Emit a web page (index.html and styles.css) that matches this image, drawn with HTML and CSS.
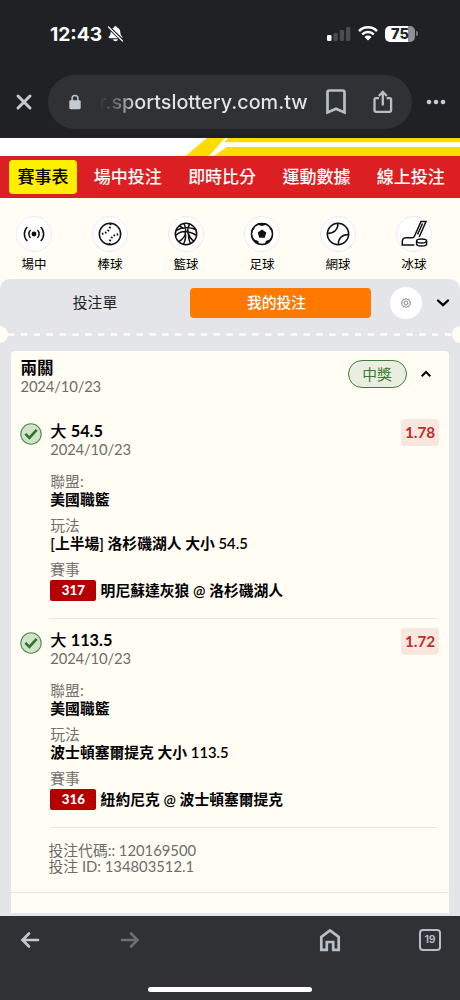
FILE: index.html
```html
<!DOCTYPE html>
<html lang="zh-Hant">
<head>
<meta charset="utf-8">
<title>我的投注</title>
<link rel="stylesheet" href="styles.css">
</head>
<body>
<header class="browser-top">
  <div class="status">
    <span class="clock">12:43</span>
    <svg class="bell" width="17" height="18" viewBox="0 0 17 18"><path d="M8.5 1.2c-.9 0-1.4.5-1.5 1.2-2.3.6-3.2 2.5-3.3 4.6-.1 2.700-.8 3.600-1.900 4.700-.5.600-.2 1.500.6 1.500h12.200c.8 0 1.100-.9.6-1.500-1.100-1.100-1.800-2-1.900-4.700-.1-2.100-1-4-3.300-4.600-.1-.7-.6-1.200-1.500-1.200zM6 14.300h5c-.2 1.200-1.200 2-2.500 2s-2.300-.8-2.500-2z" fill="#fff"/><path d="M2 2.500l14 13.500" stroke="#202124" stroke-width="3.200"/><path d="M1.500 2l14 14" stroke="#fff" stroke-width="1.200" stroke-linecap="round"/></svg>
    <svg class="signal" width="24" height="16" viewBox="0 0 24 16"><rect x="0" y="9" width="4.500" height="6" rx="1.200" fill="#fff"/><g fill="#4b4c4f"><rect x="6.500" y="7" width="4.300" height="8" rx="1.200"/><rect x="12.800" y="4" width="4.300" height="11" rx="1.200"/><rect x="19" y="1" width="4.300" height="14" rx="1.200"/></g></svg>
    <svg class="wifi" width="20" height="15" viewBox="0 0 20 15"><g fill="none" stroke="#fff" stroke-width="2.500"><path d="M1 5.100a12.700 12.700 0 0 1 18 0"/><path d="M4.200 8.400a8.200 8.200 0 0 1 11.600 0"/></g><path d="M6.500 10.900a5 5 0 0 1 7 0L10 14.500z" fill="#fff"/></svg>
    <div class="battery">75</div><i class="battery-tip"></i>
  </div>
  <div class="toolbar">
    <svg class="close" width="18" height="18" viewBox="0 0 18 18"><path d="M3 3l12 12M15 3L3 15" stroke="#c3cad2" stroke-width="3" stroke-linecap="round"/></svg>
    <div class="address">
      <svg width="12" height="16" viewBox="0 0 12 16"><path d="M3.100 7V4.300a2.900 2.900 0 0 1 5.800 0V7" fill="none" stroke="#c3cad2" stroke-width="1.500"/><rect x=".3" y="6.200" width="11.400" height="9" rx="1.400" fill="#c3cad2"/></svg>
      <span class="url">r.sportslottery.com.tw</span>
      <svg class="bookmark" width="20" height="26" viewBox="0 0 20 26"><path d="M1.500 23.500V3.200c0-1 .7-1.700 1.700-1.700h13.600c1 0 1.700.7 1.700 1.700v20.300L10 19.800z" fill="none" stroke="#b7bec7" stroke-width="2.700"/></svg>
      <svg class="share" width="20" height="24" viewBox="0 0 20 24"><path d="M6 8.200H3.200c-1 0-1.700.7-1.700 1.700v10.200c0 1 .7 1.700 1.700 1.700h13.200c1 0 1.700-.7 1.700-1.700V9.900c0-1-.7-1.700-1.700-1.700h-2.800M9.800 15.500V2.500M5.800 6l4-4 4 4" fill="none" stroke="#b7bec7" stroke-width="2.300"/></svg>
    </div>
    <svg class="more" width="20" height="6" viewBox="0 0 20 6" fill="#c3cad2"><circle cx="3" cy="3" r="2.300"/><circle cx="10" cy="3" r="2.300"/><circle cx="17" cy="3" r="2.300"/></svg>
  </div>
</header>
<main class="page">
  <svg class="banner" width="460" height="18" viewBox="0 0 460 18"><path fill="#ffdb00" d="M207 0H460V18H185.500z"/><path fill="#fff" d="M225 0h3l-3.500 4.300H460V9H227l-13.500 9h-4.500z"/></svg>
  <nav class="menu"><a class="current">賽事表</a><a>場中投注</a><a>即時比分</a><a>運動數據</a><a>線上投注</a></nav>
  <section class="sports">
    <div class="sport"><span class="disc"><svg viewBox="0 0 36 36"><circle cx="18" cy="18" r="1.700" fill="#111"/><path d="M14.600 14a5.500 5.500 0 0 0 0 8M21.400 14a5.500 5.500 0 0 1 0 8M11.300 11a9.800 9.800 0 0 0 0 14M24.700 11a9.800 9.800 0 0 1 0 14"/></svg></span>場中</div>
    <div class="sport"><span class="disc"><svg viewBox="0 0 36 36"><circle cx="18" cy="18" r="10.700"/><path d="M18.400 7.500c.5 6-4 10.500-11 10.500M17.600 28.500c-.4-6 4-10.500 11-10.500" stroke-dasharray="1.600 1.700" stroke-width="2"/></svg></span>棒球</div>
    <div class="sport"><span class="disc"><svg viewBox="0 0 36 36"><circle cx="18" cy="18" r="10.700"/><path d="M8 14.500c5-3 13-4 20.500-.8M7.500 19.500c5-5 12-5.500 20.500-.5M11 25.500c7-4 8-11 5-18M26 25.500C18 19 19.500 12 21.500 8M15.500 28.300c1.800-4 3.100-8 1.500-12.600M22.500 27.500c-2-4-2.300-8-1.700-11.500M11.500 10l4 2.500"/></svg></span>籃球</div>
    <div class="sport"><span class="disc"><svg viewBox="0 0 36 36"><circle cx="18" cy="18" r="10.500"/><path fill="#111" stroke="none" d="M18 13.500l4.300 3.100-1.600 5.100h-5.400l-1.600-5.100zM12.500 8.500L18 10l5.500-1.500-2-1.500h-7zM7.300 15.500l2.900-2.200.5-3.800-3.400 4.500zM28.700 15.500l-2.900-2.200-.5-3.800 3.400 4.500zM7.300 19l3.200 4.500 3.700 1.600 1 3.400-4-1.500-3.200-4zM28.700 19l-3.200 4.500-3.700 1.600-1 3.400 4-1.500 3.200-4z"/></svg></span>足球</div>
    <div class="sport"><span class="disc"><svg viewBox="0 0 36 36"><circle cx="18" cy="18" r="10.700"/><path d="M18 7.300C18 14 13.500 17.500 7.400 17.500M28.600 18.500c-7 .2-10.300 4-10.300 10.200"/></svg></span>網球</div>
    <div class="sport"><span class="disc"><svg viewBox="0 0 36 36"><path d="M18.300 20.500L25 5.500h5l-6.800 15.500M18.300 20.500c-.3.800-1 1.200-2 1.200H9.500c-2.600 0-3.200 2.200-3.200 4.200v3h12M26.500 7.500l-5 11"/><ellipse cx="25.600" cy="25" rx="5" ry="2"/><path d="M20.600 25v3c0 2.700 10 2.700 10 0v-3"/></svg></span>冰球</div>
  </section>
  <section class="slip">
    <div class="tabs">
      <span class="tab">投注單</span><span class="tab on">我的投注</span>
      <span class="gear"><svg width="10" height="10" viewBox="0 0 24 24" fill="none" stroke="#555" stroke-width="1.700"><path d="M12 1.500l3 2 3.500-.5 1 3.500 3 2-1 3.500 1 3.500-3 2-1 3.500-3.500-.5-3 2-3-2-3.500.5-1-3.500-3-2 1-3.500-1-3.500 3-2 1-3.500 3.500.5z"/><path d="M12 7l4.300 2.500v5L12 17l-4.300-2.500v-5z"/></svg></span>
      <svg class="down" width="14" height="10" viewBox="0 0 14 10"><path d="M2 2.500l5 4.700 5-4.700" fill="none" stroke="#000" stroke-width="2.300" stroke-linecap="round"/></svg>
    </div>
    <div class="tear"><i></i><svg width="444" height="3"><path d="M0 1.500H444" stroke="#fffdf4" stroke-width="2.600" stroke-dasharray="6.400 6.450"/></svg><i></i></div>
    <article class="card">
      <header class="card-head">
        <div><h2>兩關</h2><p class="date">2024/10/23</p></div>
        <span class="won">中獎</span>
        <svg class="up" width="12" height="8" viewBox="0 0 12 8"><path d="M1.700 6.300L6 2l4.300 4.300" fill="none" stroke="#000" stroke-width="2"/></svg>
      </header>
      <section class="bet">
        <svg class="check" width="22" height="22" viewBox="0 0 22 22"><circle cx="11" cy="11" r="10.200" fill="#d3e2cb" stroke="#4c9045" stroke-width="1.100"/><path d="M5.400 10.800l4 4 7.300-8" fill="none" stroke="#2d7623" stroke-width="2.600"/></svg>
        <div class="detail">
          <h3>大 <b>54.5</b></h3><p class="date">2024/10/23</p>
          <dl><dt>聯盟:</dt><dd>美國職籃</dd><dt>玩法</dt><dd>[上半場] 洛杉磯湖人 大小 54.5</dd><dt>賽事</dt><dd class="match"><b>317</b>明尼蘇達灰狼 @ 洛杉磯湖人</dd></dl>
        </div>
        <span class="odds">1.78</span>
      </section>
      <section class="bet">
        <svg class="check" width="22" height="22" viewBox="0 0 22 22"><circle cx="11" cy="11" r="10.200" fill="#d3e2cb" stroke="#4c9045" stroke-width="1.100"/><path d="M5.400 10.800l4 4 7.300-8" fill="none" stroke="#2d7623" stroke-width="2.600"/></svg>
        <div class="detail">
          <h3>大 <b>113.5</b></h3><p class="date">2024/10/23</p>
          <dl><dt>聯盟:</dt><dd>美國職籃</dd><dt>玩法</dt><dd>波士頓塞爾提克 大小 113.5</dd><dt>賽事</dt><dd class="match"><b>316</b>紐約尼克 @ 波士頓塞爾提克</dd></dl>
        </div>
        <span class="odds">1.72</span>
      </section>
      <footer class="codes"><p>投注代碼:: 120169500</p><p>投注 ID: 134803512.1</p></footer>
    </article>
  </section>
</main>
<footer class="browser-bottom">
  <div class="controls">
    <svg class="back" width="20" height="18" viewBox="0 0 20 18"><path d="M18 9H3M9 2.500L2.500 9 9 15.500" fill="none" stroke="#c3cad2" stroke-width="2.600" stroke-linecap="round"/></svg>
    <svg class="forward" width="20" height="18" viewBox="0 0 20 18"><path d="M2 9h15M11 2.500L17.500 9 11 15.500" fill="none" stroke="#6c7074" stroke-width="2.600" stroke-linecap="round"/></svg>
    <svg class="home" width="22" height="24" viewBox="0 0 22 24"><path d="M2.300 21.800V9L11 2.400 19.700 9v12.800h-5.500V14H7.800v7.800z" fill="none" stroke="#b7bec7" stroke-width="2.700"/></svg>
    <span class="count">19</span>
  </div>
  <div class="handle"></div>
</footer>
</body>
</html>
```
FILE: styles.css
```css
* { box-sizing: border-box; }
body, h2, h3, p, dl, dd { margin: 0; }
body {
  width: 460px;
  height: 1000px;
  overflow: hidden;
  display: flex;
  flex-direction: column;
  font-family: Lato, "Noto Sans CJK TC", sans-serif;
  color: #000;
  background: #e4e5e8;
}
svg { display: block; flex: none; }

.browser-top { height: 138px; flex: none; background: #202124; }
.status { height: 75px; display: flex; align-items: center; padding: 0 43px 8px 50px; }
.clock { font: 700 19.2px/22px Inter, sans-serif; width: 56px; color: #fff; white-space: nowrap; }
.bell { margin-left: 1px; }
.signal { margin-left: auto; }
.wifi { margin: 0 7px 0 7px; }
.battery {
  width: 30px;
  height: 16px;
  border-radius: 5px;
  text-align: center;
  font: 800 14.5px/16px Inter, sans-serif;
  color: #202124;
  background: linear-gradient(90deg, #fff 76%, #909193 76%);
}
.battery-tip { width: 2px; height: 5px; margin: 0 -1px 0 1px; border-radius: 0 2px 2px 0; background: #77787a; }
.toolbar { display: flex; align-items: center; height: 54px; padding-left: 15px; }
.address {
  width: 364px;
  height: 54px;
  margin: 0 14px 0 15px;
  padding-left: 21px;
  border-radius: 27px;
  display: flex;
  align-items: center;
  background: #303134;
}
.url {
  width: 210px;
  margin-left: 18px;
  white-space: nowrap;
  font: 500 19.8px/26px Inter, sans-serif;
  color: transparent;
  background: linear-gradient(90deg, #34353800, #77797d 20px, #e2e5e8 38px);
  background-clip: text;
  -webkit-background-clip: text;
}
.bookmark { margin-left: 17px; }
.share { margin-left: 27px; }

.page { flex: 1; background: #fffdf4; }
.banner { background: #fff; }
.menu { display: flex; align-items: center; height: 42px; padding-left: 9px; background: #db1f22; }
.menu a { width: 94.3px; flex: none; text-align: center; color: #fff; font-size: 17px; line-height: 34px; height: 34px; font-weight: 500; }
.menu .current { width: 68px; margin-right: 3.700px; border-radius: 4px; color: #000; background: #fff000; }
.sports { display: flex; height: 81px; padding-top: 17.500px; margin-left: -4px; }
.sport { width: 76px; flex: none; text-align: center; font-size: 12.5px; line-height: 17px; }
.disc { display: block; width: 36px; height: 36px; margin: 0 auto 4px; border: 1px solid #ececf1; border-radius: 50%; background: #fff; }
.disc svg { width: 36px; height: 36px; margin: -1px; fill: none; stroke: #111; stroke-width: 1.5; overflow: visible; }

.slip { height: 637px; border-radius: 10px 10px 0 0; background: #e4e5e8; }
.tabs { display: flex; align-items: center; height: 47px; }
.tab { width: 181px; margin-left: 4px; height: 30px; line-height: 29px; text-align: center; font-size: 14.8px; color: #222; }
.tab:first-child { width: 182px; }
.tab.on { border-radius: 4px; background: #ff7900; color: #fff; font-weight: 500; padding-right: 8px; }
.gear { display: grid; place-items: center; width: 32px; height: 32px; margin: 0 14px 0 19px; border-radius: 50%; background: #fff; }
.tear { display: flex; align-items: center; justify-content: space-between; height: 17px; overflow: hidden; }
.tear i { width: 17px; height: 17px; flex: none; margin: 0 -9px; border-radius: 50%; background: #fffdf4; }
.card { margin: 8px 11px 0 11px; height: 562px; border-radius: 4px 4px 0 0; background: #fffdf4; }
.card-head { display: flex; height: 68px; padding: 8px 17px 0 9.500px; }
.card-head div { flex: 1; }
h2 { height: 18px; font-size: 16.5px; line-height: 18px; font-weight: 700; }
.date { height: 18px; font-size: 14.8px; line-height: 18px; letter-spacing: -.15px; color: #6e6d69; }
.won {
  width: 59px;
  height: 28px;
  margin-top: 1px;
  border: 1px solid #3d8237;
  border-radius: 14px;
  text-align: center;
  font-size: 14.8px;
  line-height: 26px;
  color: #3d7933;
  background: #e9eee0;
}
.up { margin: 11px 0 0 13.500px; }
.bet { display: flex; height: 209px; padding: 0 10px 0 9px; align-items: flex-start; }
.check { margin-top: 4px; }
.detail { width: 387px; height: 200px; margin-left: 8.300px; padding-top: 3px; border-bottom: 1px solid #e9e3db; white-space: nowrap; }
.bet h3 { height: 18px; font-size: 16.3px; line-height: 18px; font-weight: 500; }
.bet h3 b { font-weight: 700; }
dl { padding-top: 14px; }
dt, dd { height: 18px; font-size: 14.8px; line-height: 18px; }
dt { color: #73716d; }
dd { margin-bottom: 8px; font-weight: 600; }
.match { display: flex; align-items: center; height: 22px; margin-top: 1px; line-height: 22px; }
.match b { width: 46px; height: 21px; margin-right: 4.300px; border-radius: 2px; text-align: center; color: #fff; font-size: 13.3px; line-height: 21px; background: #b40000; }
.odds { width: 38px; height: 27px; margin-left: -36px; border-radius: 4px; text-align: center; font-size: 15.3px; line-height: 27px; font-weight: 700; color: #bd3028; background: #f7e7df; }
.codes { height: 56px; padding: 5px 0 0 37.500px; border-bottom: 1px solid #e9e3db; }
.codes p { height: 16.300px; font-size: 14.8px; line-height: 16px; color: #6e6d69; }

.browser-bottom { height: 84px; flex: none; background: #303134; }
.controls { display: flex; align-items: center; height: 48px; padding-left: 20px; }
.forward { margin-left: 80px; }
.home { margin-left: 179px; }
.count { width: 22px; height: 22px; margin-left: 78px; border: 2px solid #b7bec7; border-radius: 4px; text-align: center; font: 600 10.5px/18px Inter, sans-serif; color: #b7bec7; }
.handle { width: 164px; height: 5px; margin: 23px auto 0; border-radius: 3px; background: #fff; }
```
